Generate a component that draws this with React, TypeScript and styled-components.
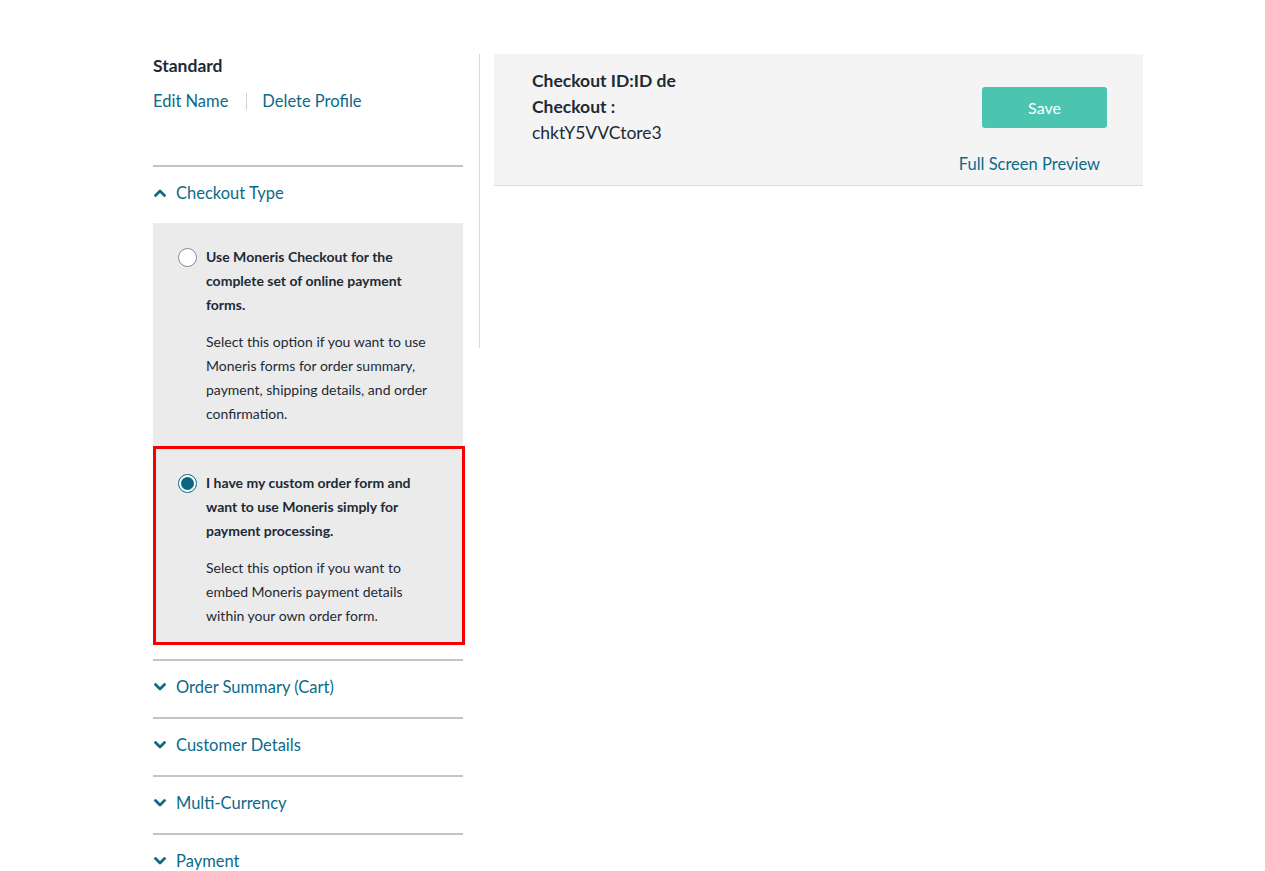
import React from 'react';
import styled, { createGlobalStyle } from 'styled-components';

const GlobalStyle = createGlobalStyle`
  body {
    margin: 0;
    background: #ffffff;
    font-family: Lato, "Open Sans", sans-serif;
    color: #1d2a36;
  }
`;

const Page = styled.div`
  display: flex;
  align-items: flex-start;
  padding: 54px 0 0 153px;
`;

const Sidebar = styled.div`
  width: 310px;
  display: flex;
  flex-direction: column;
`;

const ProfileName = styled.div`
  font-size: 17.5px;
  font-weight: 700;
  line-height: 24px;
`;

const ProfileLinks = styled.div`
  display: flex;
  align-items: center;
  margin-top: 11px;
  line-height: 24px;
  font-size: 16.5px;
`;

const LinkText = styled.a`
  color: #0c6a88;
  text-decoration: none;
  cursor: pointer;
`;

const LinkDivider = styled.span`
  width: 1px;
  height: 17px;
  background: #d0d0d0;
  margin: 0 15px 0 18px;
`;

const Accordion = styled.div`
  margin-top: 52px;
`;

const SectionHeader = styled.div`
  display: flex;
  align-items: center;
  gap: 10px;
  border-top: 2px solid #c4c4c4;
  padding: 14px 0 18px;
  line-height: 24px;
  font-size: 16.5px;
  color: #0c6a88;
  cursor: pointer;
`;

const Chevron = styled.svg`
  width: 12px;
  height: 12px;
  margin-left: 1px;
  flex: none;
`;

const OptionsBox = styled.div`
  background: #ebebeb;
  margin-bottom: 14px;
`;

const Option = styled.label<{ $highlight?: boolean }>`
  display: flex;
  align-items: flex-start;
  gap: 9px;
  padding: ${({ $highlight }) => ($highlight ? '22px 22px 14px 22px' : '22px 25px 20px 25px')};
  border: ${({ $highlight }) => ($highlight ? '3px solid #f40000' : 'none')};
  margin-right: ${({ $highlight }) => ($highlight ? '-2px' : '0')};
  cursor: pointer;
`;

const Radio = styled.span<{ $checked?: boolean }>`
  flex: none;
  width: 19px;
  height: 19px;
  margin-top: 3px;
  border-radius: 50%;
  box-sizing: border-box;
  background: #ffffff;
  border: 1px solid ${({ $checked }) => ($checked ? '#0b6580' : '#8a8a8a')};
  display: flex;
  align-items: center;
  justify-content: center;

  &::after {
    content: '';
    width: 13px;
    height: 13px;
    border-radius: 50%;
    background: ${({ $checked }) => ($checked ? '#0b6580' : 'transparent')};
  }
`;

const OptionText = styled.div`
  width: 236px;
  font-size: 14px;
  line-height: 24px;
`;

const OptionTitle = styled.div`
  font-weight: 700;
`;

const OptionDesc = styled.div`
  margin-top: 13px;
`;

const MainArea = styled.div`
  display: flex;
  align-items: flex-start;
`;

const VerticalRule = styled.div`
  width: 1px;
  height: 294px;
  background: #dadada;
  margin: 0 14px 0 16px;
`;

const Panel = styled.div`
  width: 649px;
  height: 131px;
  display: flex;
  justify-content: space-between;
  background: #f4f4f4;
  border-bottom: 1px solid #dcdcdc;
`;

const IdBlock = styled.div`
  width: 175px;
  padding: 14px 0 0 38px;
  font-size: 17.5px;
  line-height: 26px;
`;

const IdLabel = styled.div`
  font-weight: 700;
`;

const Actions = styled.div`
  display: flex;
  flex-direction: column;
  align-items: flex-end;
  padding: 33px 36px 0 0;
`;

const SaveButton = styled.button`
  width: 125px;
  height: 41px;
  border: none;
  border-radius: 3px;
  background: #4bc5b0;
  color: #ffffff;
  font-family: inherit;
  font-size: 16px;
  cursor: pointer;
`;

const PreviewLink = styled(LinkText)`
  margin-top: 24px;
  margin-right: 7px;
  font-size: 16.5px;
  line-height: 24px;
`;

const ChevronIcon = ({ up }: { up?: boolean }) => (
  <Chevron viewBox="0 0 12 12">
    <polyline
      points={up ? '1.5,8.5 6,4 10.5,8.5' : '1.5,3.5 6,8 10.5,3.5'}
      fill="none"
      stroke="#0c6a88"
      strokeWidth="2.8"
      strokeLinecap="round"
      strokeLinejoin="round"
    />
  </Chevron>
);

const collapsed = ['Order Summary (Cart)', 'Customer Details', 'Multi-Currency', 'Payment'];

export default function App() {
  return (
    <>
      <GlobalStyle />
      <Page>
        <Sidebar>
          <ProfileName>Standard</ProfileName>
          <ProfileLinks>
            <LinkText>Edit Name</LinkText>
            <LinkDivider />
            <LinkText>Delete Profile</LinkText>
          </ProfileLinks>

          <Accordion>
            <SectionHeader>
              <ChevronIcon up />
              Checkout Type
            </SectionHeader>
            <OptionsBox>
              <Option>
                <Radio />
                <OptionText>
                  <OptionTitle>Use Moneris Checkout for the complete set of online payment forms.</OptionTitle>
                  <OptionDesc>
                    Select this option if you want to use Moneris forms for order summary, payment, shipping
                    details, and order confirmation.
                  </OptionDesc>
                </OptionText>
              </Option>
              <Option $highlight>
                <Radio $checked />
                <OptionText>
                  <OptionTitle>I have my custom order form and want to use Moneris simply for payment processing.</OptionTitle>
                  <OptionDesc>
                    Select this option if you want to embed Moneris payment details within your own order form.
                  </OptionDesc>
                </OptionText>
              </Option>
            </OptionsBox>

            {collapsed.map((title) => (
              <SectionHeader key={title}>
                <ChevronIcon />
                {title}
              </SectionHeader>
            ))}
          </Accordion>
        </Sidebar>

        <MainArea>
          <VerticalRule />
          <Panel>
            <IdBlock>
              <IdLabel>Checkout ID:ID de Checkout :</IdLabel>
              <div>chktY5VVCtore3</div>
            </IdBlock>
            <Actions>
              <SaveButton>Save</SaveButton>
              <PreviewLink>Full Screen Preview</PreviewLink>
            </Actions>
          </Panel>
        </MainArea>
      </Page>
    </>
  );
}
